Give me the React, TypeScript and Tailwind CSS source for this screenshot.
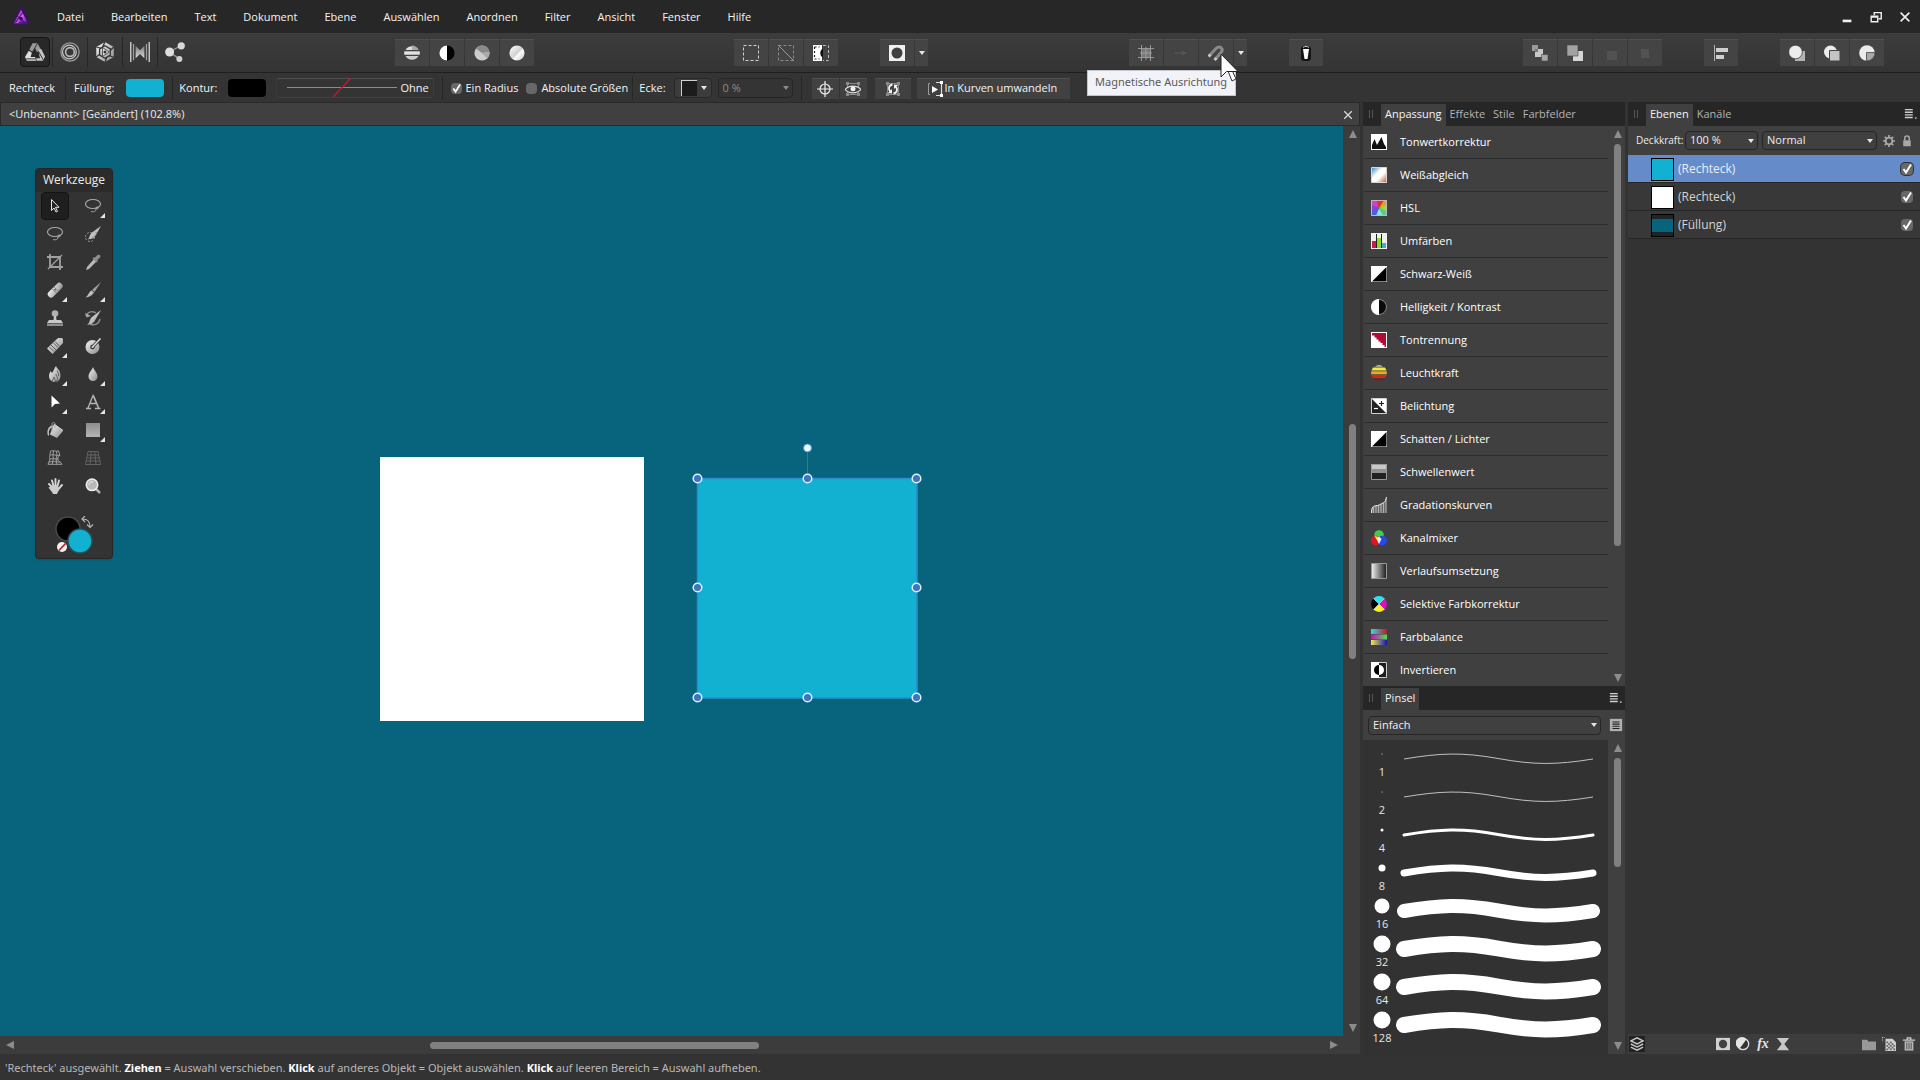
import type { ReactNode } from 'react';
import clsx from 'clsx';

interface IconProps {
  children: ReactNode;
  className?: string;
}

function Icon({ children, className = 'size-4' }: IconProps) {
  return (
    <svg viewBox="0 0 16 16" className={clsx('block shrink-0', className)} fill="none" aria-hidden="true">
      {children}
    </svg>
  );
}

// gradients shared by all icons
function Gradients() {
  return (
    <svg width="0" height="0" className="absolute" aria-hidden="true">
      <defs>
        <linearGradient id="silver" x1="0" y1="0" x2="1" y2="1">
          <stop offset="0" stopColor="#f4f4f4" />
          <stop offset="1" stopColor="#8c8c8c" />
        </linearGradient>
        <linearGradient id="steel" x1="0" y1="0" x2="0" y2="1">
          <stop offset="0" stopColor="#7d7d7d" />
          <stop offset="1" stopColor="#dcdcdc" />
        </linearGradient>
        <linearGradient id="gray" x1="0" y1="0" x2="0" y2="1">
          <stop offset="0" stopColor="#8d8d8d" />
          <stop offset="1" stopColor="#b5b5b5" />
        </linearGradient>
        <linearGradient id="logo" x1="0" y1="0" x2="1" y2="1">
          <stop offset="0" stopColor="#7a1fc4" />
          <stop offset="0.5" stopColor="#e05cf5" />
          <stop offset="1" stopColor="#5b1a9c" />
        </linearGradient>
        <linearGradient id="balance" x1="0" y1="0" x2="1" y2="1">
          <stop offset="0" stopColor="#2f86c9" />
          <stop offset="0.4" stopColor="#ffffff" />
          <stop offset="0.6" stopColor="#ffffff" />
          <stop offset="1" stopColor="#c8551c" />
        </linearGradient>
        <linearGradient id="fade" x1="0" y1="0" x2="1" y2="0">
          <stop offset="0" stopColor="#f2f2f2" />
          <stop offset="1" stopColor="#1c1c1c" />
        </linearGradient>
        <linearGradient id="cyanRed" x1="0" y1="0" x2="1" y2="0">
          <stop offset="0" stopColor="#2ee0d8" />
          <stop offset="1" stopColor="#c41230" />
        </linearGradient>
        <linearGradient id="magentaGreen" x1="0" y1="0" x2="1" y2="0">
          <stop offset="0" stopColor="#c810c0" />
          <stop offset="1" stopColor="#4be04b" />
        </linearGradient>
        <linearGradient id="yellowBlue" x1="0" y1="0" x2="1" y2="0">
          <stop offset="0" stopColor="#f0ec4a" />
          <stop offset="1" stopColor="#1414b4" />
        </linearGradient>
        <linearGradient id="sheen" x1="0" y1="0" x2="1" y2="1">
          <stop offset="0" stopColor="#ffffff" />
          <stop offset="0.5" stopColor="#d2d2d2" />
          <stop offset="0.6" stopColor="#fafafa" />
          <stop offset="1" stopColor="#c4c4c4" />
        </linearGradient>
      </defs>
    </svg>
  );
}

function Caret({ className = 'fill-[#e6e6e6]' }: { className?: string }) {
  return (
    <svg viewBox="0 0 6 4" className={clsx('block h-1 w-1.5 shrink-0', className)} aria-hidden="true">
      <path d="M0 0h6L3 4z" />
    </svg>
  );
}

function Arrow({ className }: { className?: string }) {
  return (
    <svg viewBox="0 0 8 8" className={clsx('block size-2 shrink-0 fill-[#8c8c8c]', className)} aria-hidden="true">
      <path d="M4 0l4 8H0z" />
    </svg>
  );
}

function Tick({ label, checked, className }: { label: string; checked?: boolean; className?: string }) {
  return (
    <input
      type="checkbox"
      aria-label={label}
      defaultChecked={checked}
      className={clsx('peer block size-full appearance-none rounded-sm bg-[#686868]', className)}
    />
  );
}

function TickMark() {
  return (
    <svg viewBox="0 0 12 12" className="pointer-events-none absolute inset-0 hidden size-full peer-checked:block" fill="none">
      <path d="M2.500 6l2.500 3.500L10 1.500" stroke="#fff" strokeWidth="2" />
    </svg>
  );
}

function Checkbox({ label, checked }: { label: string; checked?: boolean }) {
  return (
    <label className="flex items-center gap-1">
      <span className="relative size-[11px]">
        <Tick label={label} checked={checked} />
        <TickMark />
      </span>
      {label}
    </label>
  );
}

interface DropdownProps {
  label: string;
  value: string;
  className?: string;
  disabled?: boolean;
}

function Dropdown({ label, value, className, disabled }: DropdownProps) {
  return (
    <span className={clsx('relative block', className)}>
      <select
        aria-label={label}
        disabled={disabled}
        className="block size-full appearance-none rounded-sm border border-[#262626] bg-transparent pl-1 outline-none"
      >
        <option>{value}</option>
      </select>
      <span className="pointer-events-none absolute inset-y-0 right-1 flex items-center">
        <Caret className={disabled ? 'fill-[#8a8a8a]' : 'fill-[#e6e6e6]'} />
      </span>
    </span>
  );
}

const menus = [
  'Datei',
  'Bearbeiten',
  'Text',
  'Dokument',
  'Ebene',
  'Auswählen',
  'Anordnen',
  'Filter',
  'Ansicht',
  'Fenster',
  'Hilfe',
];

function MenuBar() {
  return (
    <header className="flex h-[33px] shrink-0 items-center bg-[#272727] pl-3">
      <Icon className="mr-[27px] size-[18px]">
        <path d="M7 0h2.500L16 14.500H0z" fill="#3d0f6e" />
        <path d="M8 1.500l6 12H2z" fill="url(#logo)" />
        <path d="M3 13L9.500 4M5 7.500l7 6M14 12.500H6" stroke="#4a0f80" strokeWidth="1" />
        <circle cx="8" cy="9.500" r="1.600" fill="#2b0a4a" />
      </Icon>
      <nav className="flex gap-[27px] pt-0.5 text-[11px] text-[#f4f4f4]">
        {menus.map(menu => (
          <button key={menu} type="button">
            {menu}
          </button>
        ))}
      </nav>
      <div className="ml-auto flex items-center gap-[15px] pr-2">
        <button type="button" aria-label="Minimieren">
          <Icon className="size-3.5">
            <path d="M3 11h10v3H3z" fill="#f0f0f0" />
          </Icon>
        </button>
        <button type="button" aria-label="Wiederherstellen">
          <Icon className="size-3.5">
            <path d="M6 6V3h8v7h-3" stroke="#f0f0f0" strokeWidth="1.600" />
            <path d="M2.500 7h7.500v6.500H2.500zM2.500 8h7.500" stroke="#f0f0f0" strokeWidth="1.600" />
          </Icon>
        </button>
        <button type="button" aria-label="Schließen">
          <Icon className="size-3.5">
            <path d="M3 3l10 10M13 3L3 13" stroke="#f0f0f0" strokeWidth="1.800" />
          </Icon>
        </button>
      </div>
    </header>
  );
}

const personas = [
  {
    name: 'Photo Persona',
    icon: (
      <>
        <path d="M6 1h4l3 5.500-3.500 1.500L8 4.500 6 8 3.500 6z" fill="#9a9a9a" />
        <path d="M10.500 6.500l2.500-1 3 6-1.500 3.500H9.500l-1-2h3.500z" fill="#c4c4c4" />
        <path d="M3 7l2.500 1.500L4.500 12H8l1 3H1.500L0 12z" fill="#dedede" />
        <path d="M10 1l-4 7M15 15l-4.500-8M1 13.500h8" stroke="#333" strokeWidth="0.800" />
      </>
    ),
  },
  {
    name: 'Liquify Persona',
    icon: (
      <>
        <circle cx="8" cy="8" r="7.300" stroke="#9c9c9c" strokeWidth="1" />
        <circle cx="7.500" cy="8" r="5.500" stroke="#c8c8c8" strokeWidth="1" />
        <circle cx="8" cy="8" r="3.500" stroke="#b8b8b8" strokeWidth="1.300" />
      </>
    ),
  },
  {
    name: 'Develop Persona',
    icon: (
      <>
        <path d="M8 0l7 4v8l-7 4-7-4V4z" fill="url(#silver)" />
        <path d="M8 3l4.300 2.500v5L8 13l-4.300-2.500v-5z" stroke="#333" strokeWidth="1" />
        <path d="M8 0L6 4M15 4l-3 3M15 12l-4-1M8 16l1.500-4M1 12l3-2.500M1 4l4 1" stroke="#333" strokeWidth="1" />
        <path d="M6 4.500L11.500 8 6 11.500z" fill="#e0e0e0" stroke="#333" strokeWidth="0.600" />
        <circle cx="8" cy="8" r="1.200" fill="#333" />
      </>
    ),
  },
  {
    name: 'Tone Mapping Persona',
    icon: (
      <>
        <path d="M0.600 0v16M15.400 0v16" stroke="#c4c4c4" strokeWidth="1.200" />
        <path d="M2.800 1.500v13M13.200 1.500v13" stroke="#a0a0a0" strokeWidth="1" />
        <path d="M4.500 3l3.500 3.500L11.500 3v10L8 9.500 4.500 13z" fill="url(#steel)" />
      </>
    ),
  },
  {
    name: 'Export Persona',
    icon: (
      <>
        <path d="M3.500 8l9-5M3.500 8l8 5.500" stroke="#9a9a9a" strokeWidth="1" />
        <circle cx="3.700" cy="8" r="3.600" fill="#dedede" />
        <circle cx="13" cy="3" r="2.900" fill="#d8d8d8" />
        <circle cx="11.500" cy="13.500" r="2.400" fill="#cfcfcf" />
      </>
    ),
  },
];

interface Tool {
  name: string;
  icon: ReactNode;
}

const autoTools: Tool[] = [
  {
    name: 'Auto-Tonwerte',
    icon: (
      <>
        <path d="M1.500 5a7.500 7.500 0 0 1 13 0z" fill="#dedede" />
        <path d="M8 .5A7.500 7.500 0 0 1 14.500 5H8z" fill="#a8a8a8" />
        <path d="M.2 6.300h15.600v3.400H.2z" fill="#e4e4e4" />
        <path d="M1.500 11a7.500 7.500 0 0 0 13 0z" fill="#cfcfcf" />
      </>
    ),
  },
  {
    name: 'Auto-Kontrast',
    icon: (
      <>
        <circle cx="8" cy="8" r="7.600" fill="#000" />
        <path d="M8 .4a7.600 7.600 0 0 0 0 15.200z" fill="#fff" />
      </>
    ),
  },
  {
    name: 'Auto-Farben',
    icon: (
      <>
        <circle cx="8" cy="8" r="7.600" fill="#cccccc" />
        <path d="M8 8L2 3.500A7.600 7.600 0 0 1 15.500 7z" fill="#8a8a8a" />
        <path d="M8 8l7.500-1a7.600 7.600 0 0 1-2.500 6.500z" fill="#a8a8a8" />
      </>
    ),
  },
  { name: 'Auto-Weißabgleich', icon: <circle cx="8" cy="8" r="7.600" fill="url(#sheen)" /> },
];

const selectionTools: Tool[] = [
  {
    name: 'Alles auswählen',
    icon: <path d="M.5.5h15v15H.5z" stroke="#d0d0d0" strokeWidth="1" strokeDasharray="3 2" />,
  },
  {
    name: 'Auswahl aufheben',
    icon: (
      <>
        <path d="M.5.5h15v15H.5z" stroke="#8a8a8a" strokeWidth="1" strokeDasharray="3 2" />
        <path d="M0 0l16 16" stroke="#9a9a9a" strokeWidth="1" />
      </>
    ),
  },
  {
    name: 'Pixelauswahl umkehren',
    icon: (
      <>
        <path d="M0 0h9v16H0z" fill="#fff" />
        <path d="M1.500 2h5M1.500 2v12M1.500 14h5" stroke="#222" strokeWidth="1.200" strokeDasharray="2 2" />
        <path d="M10 3.500v9a5 5 0 0 1 0-9z" fill="#111" />
        <path d="M10 .5h5.500v15H10" stroke="#bbb" strokeWidth="1" strokeDasharray="3 2" />
      </>
    ),
  },
];

const orderTools: Tool[] = [
  {
    name: 'Ganz nach hinten',
    icon: (
      <>
        <path d="M0 0h6v6H0z" fill="#9a9a9a" />
        <path d="M3 4h8v8H3z" fill="#c8c8c8" />
        <path d="M3 4h3v3H3z" fill="#777" />
        <path d="M9.500 9.500h6.500V16H9.500z" fill="#a6a6a6" stroke="#444" strokeWidth="0.600" />
      </>
    ),
  },
  {
    name: 'Nach hinten',
    icon: (
      <>
        <path d="M6 6h10v10H6z" fill="#d6d6d6" />
        <path d="M0 0h11v11H0z" fill="#a2a2a2" stroke="#444" strokeWidth="0.600" />
      </>
    ),
  },
  { name: 'Nach vorne', icon: <path d="M5 6h10v9H5z" fill="#525252" /> },
  { name: 'Ganz nach vorne', icon: <path d="M4 4h8v9H4z" fill="#525252" /> },
];

const booleanTools: Tool[] = [
  {
    name: 'Hinter Auswahl einfügen',
    icon: (
      <>
        <path d="M6 6h10v10H6z" fill="#b4b4b4" />
        <circle cx="6.500" cy="7" r="6.800" fill="#ececec" stroke="#444" strokeWidth="0.800" />
      </>
    ),
  },
  {
    name: 'Über Auswahl einfügen',
    icon: (
      <>
        <circle cx="6.500" cy="7" r="6.500" fill="#ececec" />
        <path d="M5.500 5.500H16V16H5.500z" fill="#c4c4c4" stroke="#444" strokeWidth="1" />
      </>
    ),
  },
  {
    name: 'In Auswahl einfügen',
    icon: (
      <>
        <circle cx="8" cy="8" r="7.800" fill="#ececec" />
        <path d="M7.500 7.500h8.300A7.800 7.800 0 0 1 7.500 15.800z" fill="#a8a8a8" stroke="#444" strokeWidth="0.800" />
      </>
    ),
  },
];

function ToolGroup({ tools, className, children }: { tools: Tool[]; className?: string; children?: ReactNode }) {
  return (
    <div className={clsx('flex h-[27px] gap-px rounded-sm', className)}>
      {tools.map(tool => (
        <button
          key={tool.name}
          type="button"
          aria-label={tool.name}
          className="flex w-[34px] items-center justify-center border-t border-[#505050] bg-[#444444]"
        >
          <Icon>{tool.icon}</Icon>
        </button>
      ))}
      {children}
    </div>
  );
}

function MoreButton({ label }: { label: string }) {
  return (
    <button
      type="button"
      aria-label={label}
      className="flex w-[13px] items-center justify-center border-t border-[#505050] bg-[#444444]"
    >
      <Caret />
    </button>
  );
}

function Toolbar() {
  return (
    <div className="flex h-10 shrink-0 items-center border-b border-[#1f1f1f] bg-linear-to-b from-[#3c3c3c] to-[#343434] pr-9 pb-px pl-5">
      <div className="flex w-[375px] items-center">
        {personas.map((persona, index) => (
          <button
            key={persona.name}
            type="button"
            aria-label={persona.name}
            className={clsx(
              'flex h-[30px] items-center justify-center',
              index === 0
                ? 'mr-0.5 w-[30px] rounded-sm border border-[#151515] bg-[#282828]'
                : 'w-[35px] border-l border-[#262626]'
            )}
          >
            <Icon className="size-5">{persona.icon}</Icon>
          </button>
        ))}
      </div>
      <ToolGroup tools={autoTools} />
      <ToolGroup className="ml-[200px]" tools={selectionTools} />
      <ToolGroup
        className="ml-[42px]"
        tools={[
          {
            name: 'Schnellmaske',
            icon: (
              <>
                <path d="M0 0h16v16H0z" fill="#f0f0f0" />
                <circle cx="8" cy="8" r="5.500" fill="#404040" />
              </>
            ),
          },
        ]}
      >
        <MoreButton label="Maskenoptionen" />
      </ToolGroup>
      <div className="relative ml-[201px]">
        <ToolGroup
          tools={[
            {
              name: 'Raster anzeigen',
              icon: (
                <>
                  <path d="M4 4h9v9H4z" fill="#777" />
                  <path d="M3.500 0v16M8 2v13M12.500 0v16M0 3.500h16M2 8h12M0 12.500h16" stroke="#a0a0a0" strokeWidth="0.900" />
                </>
              ),
            },
            { name: 'Hilfslinien', icon: <path d="M2 8h11M9 6l3 2-3 2" stroke="#5c5c5c" strokeWidth="1" /> },
            {
              name: 'Magnetische Ausrichtung',
              icon: (
                <>
                  <path d="M1.500 10.500L8 3.500c4-3.500 8 .5 5 4L7.500 14" stroke="#8a8a8a" strokeWidth="3" />
                  <path d="M.5 11.500l2-2M6.500 15l2-2" stroke="#c8c8c8" strokeWidth="3" />
                </>
              ),
            },
          ]}
        >
          <MoreButton label="Ausrichtungsoptionen" />
        </ToolGroup>
        {/* tooltip and pointer over the magnet button */}
        <div
          role="tooltip"
          className="absolute top-[31px] left-[-42px] z-10 flex h-[26px] w-[149px] items-center border border-[#c4c4cc] bg-[#f2f3f8] pl-[7px] font-['Noto_Sans',sans-serif] text-[11px] whitespace-nowrap text-[#5a5a5e]"
        >
          Magnetische Ausrichtung
        </div>
        <svg viewBox="0 0 19 30" className="pointer-events-none absolute top-[14px] left-[91px] z-20 h-[30px] w-[19px]">
          <path d="M8 18l4 10 4-2-4-9" fill="#fff" stroke="#333" strokeWidth="1" />
          <path d="M1 1v23l5.500-5.500H18z" fill="#fff" stroke="#222" strokeWidth="1" />
        </svg>
      </div>
      <ToolGroup
        className="ml-[42px]"
        tools={[
          {
            name: 'Assistent',
            icon: (
              <>
                <path d="M3 3l2-2h6l2 2v11l-2 2H5l-2-2z" fill="#151515" />
                <path d="M5 4h6l-1.500 10h-3z" fill="#fff" />
                <path d="M5 2.500c2-1.500 4-1.500 6 0" stroke="#ccc" strokeWidth="1" />
              </>
            ),
          },
        ]}
      />
      <div className="ml-auto flex gap-[42px]">
        <ToolGroup tools={orderTools} />
        <ToolGroup
          tools={[
            {
              name: 'Ausrichtung',
              icon: (
                <>
                  <path d="M1.500 0v16" stroke="#b0b0b0" strokeWidth="1" />
                  <path d="M3 3h12v4H3zM3 10h8v4H3z" fill="#cfcfcf" />
                </>
              ),
            },
          ]}
        />
        <ToolGroup tools={booleanTools} />
      </div>
    </div>
  );
}

function Divider() {
  return <span className="h-6 w-px bg-[#262626]" />;
}

const boxHandles = (
  <>
    <path d="M2.500 2.500h11v11h-11z" stroke="#8a8a8a" strokeWidth="1" />
    <path d="M1 1h3v3H1zM12 1h3v3h-3zM1 12h3v3H1zM12 12h3v3h-3z" fill="#8a8a8a" />
  </>
);

function ContextBar() {
  return (
    <div className="flex h-[29px] shrink-0 items-center bg-[#343434] pt-px pl-[9px] text-[11px] text-[#f4f4f4]">
      <span className="w-12">Rechteck</span>
      <span className="mx-2 flex">
        <Divider />
      </span>
      <label className="flex items-center gap-3">
        Füllung:
        <button type="button" aria-label="Füllung" className="h-[18px] w-[38px] rounded-sm bg-[#12b1d2]" />
      </label>
      <span className="mr-1.5 ml-2 flex">
        <Divider />
      </span>
      <label className="flex items-center gap-2.5">
        Kontur:
        <button type="button" aria-label="Kontur" className="h-[18px] w-[38px] rounded-sm bg-black" />
      </label>
      <button
        type="button"
        className="mr-2 ml-2.5 flex h-5 w-[158px] items-center gap-1 rounded-sm border border-t-[#505050] border-x-[#3c3c3c] border-b-[#404040] pl-2.5"
      >
        <svg viewBox="0 0 110 20" className="h-5 w-[110px]" aria-hidden="true">
          <path d="M0 9.500h110" stroke="#8c8c8c" />
          <path d="M46 19L64 0" stroke="#b0202c" strokeWidth="1.500" />
        </svg>
        Ohne
      </button>
      <Divider />
      <div className="mr-1 ml-2 flex gap-2">
        <Checkbox label="Ein Radius" checked />
        <Checkbox label="Absolute Größen" />
      </div>
      <Divider />
      <span className="mr-2 ml-1.5">Ecke:</span>
      <button
        type="button"
        aria-label="Eckentyp"
        className="mr-1.5 flex h-5 w-[38px] items-center justify-between rounded-sm border border-[#282828] bg-[#3c3c3c] pr-1 pl-1.5"
      >
        <span className="h-4 w-4 border-t border-l border-[#d0d0d0] bg-[#1c1c1c]" />
        <Caret />
      </button>
      <Dropdown label="Eckenradius" value="0 %" disabled className="mr-2 h-5 w-[75px] text-[#8a8a8a]" />
      <Divider />
      <div className="ml-2.5 flex h-[21px] gap-px">
        <button type="button" aria-label="Transformationsursprung" className="flex w-[27px] items-center justify-center border-t border-[#505050] bg-[#414141]">
          <Icon>
            <circle cx="8" cy="8" r="5" stroke="#f0f0f0" strokeWidth="1.200" />
            <path d="M8 0v16M0 8h16" stroke="#f0f0f0" strokeWidth="1.200" />
          </Icon>
        </button>
        <button type="button" aria-label="Auswahl ausblenden" className="flex w-[27px] items-center justify-center border-t border-[#505050] bg-[#414141]">
          <Icon>
            {boxHandles}
            <path d="M0 8.500c4-4.500 12-4.500 16 0-4 4.500-12 4.500-16 0z" fill="#414141" stroke="#e0e0e0" strokeWidth="1.200" />
            <circle cx="8" cy="7.800" r="2.500" fill="#f0f0f0" />
          </Icon>
        </button>
      </div>
      <button type="button" aria-label="Auswahlfelder drehen" className="ml-2 flex h-[21px] w-9 items-center justify-center border-t border-[#505050] bg-[#414141]">
        <Icon>
          {boxHandles}
          <path d="M7.500 3.500C3.500 4 3 8.500 5.500 10.500M8.500 12.500c4-.5 4.500-5 2-7" stroke="#f4f4f4" strokeWidth="1.800" />
          <path d="M7 12.500l-4-.5L7 8zM9 3.500l4 .5L9 8z" fill="#f4f4f4" />
        </Icon>
      </button>
      <button
        type="button"
        className="ml-1.5 flex h-[21px] w-[153px] items-center gap-0.5 border-t border-[#505050] bg-[#414141] pl-2.5"
      >
        <Icon>
          <path d="M3 2.500H1.500v11H3" stroke="#999" strokeWidth="1" />
          <path d="M5 5l6 3.500L5 12z" fill="#fff" />
          <path d="M9 1.500h5.500v13H9" stroke="#ddd" strokeWidth="1.200" />
          <path d="M13 0h3v3h-3zM13 13h3v3h-3z" fill="#fff" />
        </Icon>
        In Kurven umwandeln
      </button>
    </div>
  );
}

const lasso = (
  <>
    <ellipse cx="8" cy="6" rx="7.500" ry="4.500" stroke="#a8a8a8" strokeWidth="1.100" />
    <path d="M13 9c1 1.500-1 2.500-2 1.500s1-2 2.500-1M11 11c0 3-3 3-5 2.500" stroke="#a8a8a8" strokeWidth="1" />
  </>
);

const tools: (Tool & { more?: boolean })[] = [
  {
    name: 'Verschieben',
    icon: <path d="M4.500 1.500v11l2.500-2.500 2 4 1.500-.7-2-4h3.500z" fill="#222" stroke="#e8e8e8" strokeWidth="1" />,
  },
  { name: 'Freihandauswahl', more: true, icon: lasso },
  { name: 'Lasso', icon: lasso },
  {
    name: 'Auswahlpinsel',
    icon: (
      <>
        <circle cx="5" cy="11" r="4.500" stroke="#999" strokeWidth="1" strokeDasharray="2 1.500" />
        <path d="M16 0l-4 7-3-2zM9 5l3 2.500-3 4c-2 2-4 1-6 2 1.500-2 1.500-4 3-6z" fill="url(#silver)" />
      </>
    ),
  },
  {
    name: 'Zuschneiden',
    icon: (
      <>
        <path d="M3 0v13h13M0 3h13v13" stroke="#a0a0a0" strokeWidth="1.800" />
        <path d="M1 15L15 1" stroke="#a0a0a0" strokeWidth="1.200" />
      </>
    ),
  },
  {
    name: 'Pipette',
    icon: (
      <>
        <path d="M9 5l2.500 2.500L4 15l-3 1 1-3z" fill="#b8b8b8" />
        <path d="M7.500 4.500l4 4 1.500-1.500-.8-.8L15 3.500C16.500 1.500 14 0 12.500 1L9.800 3.800 9 3z" fill="#8c8c8c" />
      </>
    ),
  },
  {
    name: 'Reparaturpinsel',
    more: true,
    icon: (
      <>
        <rect x="-1" y="5" width="18" height="6.500" rx="3" transform="rotate(-45 8 8)" fill="url(#silver)" />
        <path d="M5 6.500L9.500 11M7 5l4.500 4.500" stroke="#777" strokeWidth="0.800" />
        <path d="M7 7.500h2M7.500 9h1" stroke="#666" strokeWidth="1" />
      </>
    ),
  },
  {
    name: 'Malpinsel',
    more: true,
    icon: (
      <>
        <path d="M16 0L9.500 10 7 8z" fill="#a0a0a0" />
        <path d="M6.500 8.500L9 10.500c-1.500 3-4.500 4.500-8.500 5 2.500-1.500 3-5 6-7z" fill="url(#silver)" />
      </>
    ),
  },
  {
    name: 'Klonstempel',
    icon: (
      <>
        <circle cx="8" cy="3.500" r="3.300" fill="#b0b0b0" />
        <path d="M7 6h2l.5 4H14l2 3H0l2-3h4.500z" fill="#c8c8c8" />
        <path d="M0 13.500h16V16H0z" fill="#8e8e8e" />
      </>
    ),
  },
  {
    name: 'Protokollpinsel',
    icon: (
      <>
        <path d="M1 6c2-5 7-5 10-3M15 9c-1 5-6 7-10 5" stroke="#8a8a8a" strokeWidth="1.500" />
        <path d="M0 3l1.500 4.500L6 6z" fill="#a8a8a8" />
        <path d="M16 0l-5.500 9.500L7 7zM7 7l3.500 2.500c-2 4-4 4.500-8.500 5.500 3-2 2-5 5-8z" fill="url(#silver)" />
      </>
    ),
  },
  {
    name: 'Radierer',
    more: true,
    icon: (
      <>
        <path d="M11 0h4l1 1v4L5.500 16 0 10.500z" fill="url(#silver)" />
        <path d="M4 7l5 5M6.500 5l4.500 4.500M2.500 9l4.500 4.500M8 3.500L12.500 8" stroke="#555" strokeWidth="1" />
      </>
    ),
  },
  {
    name: 'Schärfen',
    icon: (
      <>
        <circle cx="7.500" cy="9" r="7" fill="url(#silver)" />
        <circle cx="7.500" cy="9" r="2.300" fill="#333" />
        <path d="M7.500 9L15 1" stroke="#333" strokeWidth="3" />
        <path d="M7.500 9L15.500 .5" stroke="#e0e0e0" strokeWidth="1.500" />
        <circle cx="7.500" cy="9" r="1" fill="#ddd" />
      </>
    ),
  },
  {
    name: 'Nachbelichten',
    more: true,
    icon: (
      <>
        <path d="M9 0c1 3 4.500 4 4.500 9.500C13.500 13 11.500 16 8 16s-6-2.500-6-6c0-2 1-3.500 1.500-5 .7 1 1 1.500 1.500 2C7 5 7 2 9 0z" fill="url(#silver)" />
        <path d="M9 8c0 2 1.500 2.500 1.500 4.500 0 2-1 3-2.500 3.500 1-2-1-3-1-5 0 2-2 2.500-1.500 4.500M10 4.500c1 2 2 3 1.500 5.500" stroke="#555" strokeWidth="0.900" />
      </>
    ),
  },
  {
    name: 'Weichzeichnen',
    more: true,
    icon: <path d="M8 1c1 3 4.500 6 4.500 9.500a4.500 4.500 0 0 1-9 0C3.500 7 7 4 8 1z" fill="url(#silver)" />,
  },
  { name: 'Knoten', more: true, icon: <path d="M4.500 1.500v12L8 10l5-.5z" fill="#fff" /> },
  {
    name: 'Kunsttext',
    more: true,
    icon: <path d="M1 14.500h5M10 14.500h5.500M3 14L8 1.500 13.500 14M5 9.500h6.500M8.700 2l5 12" stroke="#b4b4b4" strokeWidth="1.300" />,
  },
  {
    name: 'Füllwerkzeug',
    icon: (
      <>
        <path d="M7 2l9 7-6 7-7-3.500z" fill="url(#silver)" />
        <path d="M7 2l9 6.500" stroke="#e8e8e8" strokeWidth="1" />
        <path d="M7 3.500C3 3 0 6 .5 12c.5 2.500 2 2 1.500 0C1.500 8 3 6 6 5z" fill="#c4c4c4" />
        <path d="M5 10V2c0-2 3-2 3 0v4" stroke="#aaa" strokeWidth="0.900" />
      </>
    ),
  },
  { name: 'Rechteck', more: true, icon: <path d="M1 1h14v14H1z" fill="url(#gray)" /> },
  {
    name: 'Maschenverzerrung',
    icon: (
      <path
        d="M3.500 1c3-1 6 1 8-.2l1.500 4.500c-2 1.200-2 2.200-3 4l5 5H1L3 9c-1-1.500 0-3 .5-8zM3 5c3-1 6 1 10 .3M3 9c3-1 5 .5 9 0M2 12c4-1 6 0 11.500 0M6.500 1L6 5l.2 4L5 14.500M9.500 1l.5 4-1 4 1 5.500"
        stroke="#a8a8a8"
        strokeWidth="0.900"
      />
    ),
  },
  {
    name: 'Perspektive',
    icon: (
      <path
        d="M3 1.500h10l2.500 13H.500zM2.500 5h11M2 8h12.500M1.200 11h14M6.300 1.500L5 14.500M9.700 1.500L11 14.500"
        stroke="#686868"
        strokeWidth="0.900"
      />
    ),
  },
  {
    name: 'Ansicht',
    icon: (
      <>
        <path d="M5 9L2 6M6.500 8L5 2.500M8.500 8V1M10.500 8l1.500-5.500M11.500 11L15 7" stroke="#d6d6d6" strokeWidth="1.900" strokeLinecap="round" />
        <path d="M4.500 8C7 6.500 10 6.500 11.500 9.500L13 9c-.5 3-2 4.500-3 7H6c-.5-2-3-4-4.500-6.500z" fill="#cccccc" />
      </>
    ),
  },
  {
    name: 'Zoom',
    icon: (
      <>
        <path d="M10.500 10.500L15 15" stroke="#b0b0b0" strokeWidth="2.500" />
        <circle cx="7" cy="6.800" r="5.700" fill="#b8b8b8" stroke="#ececec" strokeWidth="1.600" />
        <path d="M4 7c0-2 1.500-3.500 4-3" stroke="#f4f4f4" strokeWidth="1" />
      </>
    ),
  },
];

function ToolPalette() {
  return (
    <section
      aria-label="Werkzeuge"
      className="absolute top-[42px] left-[35px] w-[78px] rounded-sm border border-[#262626] bg-[#333333] pb-1 shadow"
    >
      <h2 className="flex h-[23px] items-center justify-center bg-[#2b2b2b] pb-0.5 text-[12px] text-[#ececec]">Werkzeuge</h2>
      <div className="grid grid-cols-2 justify-items-center">
        {tools.map((tool, index) => (
          <button
            key={tool.name}
            type="button"
            aria-label={tool.name}
            className={clsx(
              'relative flex size-7 items-center justify-center rounded-sm',
              index === 0 && 'border border-[#141414] bg-[#1f1f1f]'
            )}
          >
            <Icon>{tool.icon}</Icon>
            {tool.more && (
              <svg viewBox="0 0 5 5" className="absolute right-0.5 bottom-0.5 size-[5px] fill-[#e6e6e6]">
                <path d="M5 0v5H0z" />
              </svg>
            )}
          </button>
        ))}
      </div>
      <svg viewBox="0 0 40 38" className="mt-4 ml-[19px] block h-[38px] w-10" role="img" aria-label="Farben">
        <circle cx="13" cy="13" r="12" fill="#000" stroke="#4a4a4a" strokeWidth="1.500" />
        <circle cx="25" cy="25" r="12" fill="#12b1d2" stroke="#2c5058" strokeWidth="1.500" />
        <circle cx="7" cy="31" r="5" fill="#f4f4f4" />
        <path d="M4 34.500l6.500-7" stroke="#c81e32" strokeWidth="1.800" />
        <path d="M28 3c5 0 7 3 7 8M30 0l-3 3 3 3M32 8.500l3 3 3-3" stroke="#b4b4b4" strokeWidth="1.200" fill="none" />
      </svg>
    </section>
  );
}

const handles = [
  [0.5, 0.5],
  [110.5, 0.5],
  [219.5, 0.5],
  [0.5, 109.5],
  [219.5, 109.5],
  [0.5, 219.5],
  [110.5, 219.5],
  [219.5, 219.5],
];

function Canvas() {
  return (
    <main className="relative min-w-0 flex-1 overflow-hidden bg-[#08647d]">
      <div className="absolute top-[331px] left-[380px] size-[264px] bg-white" />
      <svg viewBox="0 0 221 221" className="absolute top-[352px] left-[697px] size-[221px] overflow-visible">
        <path d="M.5.5h219.500v219.500H.5z" fill="#12b1d2" stroke="#2a8ccc" strokeWidth="1.500" />
        <path d="M110.500 0v-25" stroke="#2479c8" />
        <circle cx="110.500" cy="-30" r="4" fill="#f0faff" stroke="#4a90d0" />
        {handles.map(([x, y]) => (
          <circle key={`${x}-${y}`} cx={x} cy={y} r="4.300" fill="#3a76c4" stroke="#e4f2fc" strokeWidth="1.500" />
        ))}
      </svg>
      <ToolPalette />
    </main>
  );
}

function Grip() {
  return <span className="mr-2 ml-1.5 h-2 w-1 border-x border-[#555555]" />;
}

interface TabsProps {
  tabs: string[];
  menu?: boolean;
}

function PanelTabs({ tabs, menu }: TabsProps) {
  return (
    <div className="flex h-6 shrink-0 items-center bg-[#262626] pr-0.5 text-[11px] text-[#b4b4b4]">
      <Grip />
      {tabs.map((tab, index) => (
        <button
          key={tab}
          type="button"
          className={clsx('h-[22px] self-end px-1 pb-0.5', index === 0 && 'bg-[#404040] text-[#f4f4f4]')}
        >
          {tab}
        </button>
      ))}
      {menu && (
        <button type="button" aria-label="Bedienfeldmenü" className="ml-auto">
          <Icon className="size-3.5">
            <path d="M1 3h9M1 6h9M1 9h9M1 12h9" stroke="#d0d0d0" strokeWidth="1.500" />
            <path d="M12 12h3l-1.500 2z" fill="#d0d0d0" />
          </Icon>
        </button>
      )}
    </div>
  );
}

const adjustments: Tool[] = [
  {
    name: 'Tonwertkorrektur',
    icon: (
      <>
        <path d="M0 0h16v16H0z" fill="#fff" />
        <path d="M1 15V11l2.500-6L6 11l4.500-8L13 10l2 3v2z" fill="#111" />
      </>
    ),
  },
  {
    name: 'Weißabgleich',
    icon: <path d="M.5.5h15v15H.5z" fill="url(#balance)" stroke="#d8d8d8" />,
  },
  {
    name: 'HSL',
    icon: (
      <>
        <path d="M0 0h6l2 8L0 6z" fill="#c846c0" />
        <path d="M6 0h7L8 8z" fill="#e83028" />
        <path d="M13 0h3v6L8 8z" fill="#e8a020" />
        <path d="M16 5v7L8 8z" fill="#8ae82c" />
        <path d="M16 11v5h-5L8 8z" fill="#50d080" />
        <path d="M12 16H4l4-8z" fill="#90e0f0" />
        <path d="M5 16H0v-5l8-3z" fill="#4a60e0" />
        <path d="M0 12V5l8 3z" fill="#8048d8" />
        <path d="M.5.5h15v15H.5z" stroke="#c4b4c4" />
      </>
    ),
  },
  {
    name: 'Umfärben',
    icon: (
      <>
        <path d="M0 0h16v16H0z" fill="#f0f0f0" />
        <path d="M1 8h4v7H1z" fill="#d01848" />
        <path d="M6 5h4v10H6z" fill="#84e020" />
        <path d="M11 10h4v5h-4z" fill="#4aa8d0" />
        <path d="M5.500 1v14M10.500 1v14" stroke="#222" />
      </>
    ),
  },
  {
    name: 'Schwarz-Weiß',
    icon: (
      <>
        <path d="M0 0h16v16H0z" fill="#fff" />
        <path d="M15.500 1v14.500H1z" fill="#000" />
      </>
    ),
  },
  {
    name: 'Helligkeit / Kontrast',
    icon: (
      <>
        <circle cx="8" cy="8" r="7.500" fill="#0a0a0a" stroke="#888" />
        <path d="M8 0a8 8 0 0 0 0 16z" fill="#fff" />
      </>
    ),
  },
  {
    name: 'Tontrennung',
    icon: (
      <>
        <path d="M0 0h16v16H0z" fill="#fff" />
        <path d="M1 1h14v14h-1.500v-2h-2v-2h-2V9.500h-2v-2h-2v-2h-2v-2H1z" fill="#b40a32" />
      </>
    ),
  },
  {
    name: 'Leuchtkraft',
    icon: (
      <>
        <path d="M4 1.500a8 8 0 0 1 8 0z" fill="#f4f0b0" />
        <path d="M2 2.500h12l1.500 3H.5z" fill="#f4e838" />
        <path d="M.2 6.300h15.600v3H.2z" fill="#f0a828" />
        <path d="M.3 10h15.400l-1.500 3H1.800z" fill="#d42820" />
        <path d="M2.500 13.500h11a8 8 0 0 1-11 0z" fill="#78201c" />
      </>
    ),
  },
  {
    name: 'Belichtung',
    icon: (
      <>
        <path d="M.5.5h15v15H.5z" fill="#222" stroke="#d0d0d0" />
        <path d="M1 1h14v14z" fill="#fff" />
        <path d="M10.500 3v5M8 5.500h5" stroke="#222" strokeWidth="1.200" />
        <path d="M3 10.500h4" stroke="#fff" strokeWidth="1.200" />
      </>
    ),
  },
  {
    name: 'Schatten / Lichter',
    icon: (
      <>
        <path d="M0 0h16v16H0z" fill="#fff" />
        <path d="M15.500 1v14.500H1z" fill="#000" />
      </>
    ),
  },
  {
    name: 'Schwellenwert',
    icon: (
      <>
        <path d="M0 0h16v6H0z" fill="#c8c8c8" />
        <path d="M0 5h16v5H0z" fill="#909090" />
        <path d="M0 9h16v7H0z" fill="#222" />
        <path d="M.5.5h15v15H.5z" stroke="#999" />
      </>
    ),
  },
  {
    name: 'Gradationskurven',
    icon: (
      <>
        <path d="M0 16c0-10 5-5 10-9 2-1.500 4-1 5.500-7V16z" fill="#6a6a6a" />
        <path d="M2.500 10v6M5 8.500V16M7.500 8V16M10 7v9M12.500 6v10M15 2v14" stroke="#b8b8b8" strokeWidth="0.900" />
        <path d="M.5 16c0-10 5-5.500 9.500-9 2.500-1.500 4.500-1 5.500-7" stroke="#f0f0f0" strokeWidth="1" />
      </>
    ),
  },
  {
    name: 'Kanalmixer',
    icon: (
      <>
        <circle cx="8" cy="5" r="4.800" fill="#3cd048" />
        <circle cx="4.800" cy="10.500" r="4.800" fill="#e01428" />
        <circle cx="11.200" cy="10.500" r="4.800" fill="#2848e8" />
        <path d="M8 6.500l2.500 2.500L8 14l-2.500-5z" fill="#f0f0f4" />
        <path d="M3.500 6l4.500 1-2.500 2.500z" fill="#f0e840" />
      </>
    ),
  },
  { name: 'Verlaufsumsetzung', icon: <path d="M.5.5h15v15H.5z" fill="url(#fade)" stroke="#999" /> },
  {
    name: 'Selektive Farbkorrektur',
    icon: (
      <>
        <path d="M8 8L2.400 2.400a8 8 0 0 1 11.200 0z" fill="#2ce4ec" />
        <path d="M8 8l5.600-5.600a8 8 0 0 1 0 11.200z" fill="#d810c0" />
        <path d="M8 8l5.600 5.600a8 8 0 0 1-11.200 0z" fill="#f4f424" />
        <path d="M8 8l-5.600 5.600a8 8 0 0 1 0-11.200z" fill="#000" />
        <path d="M2.400 2.400l11.200 11.200M13.600 2.400L2.400 13.600" stroke="#ddd" strokeWidth="0.700" />
      </>
    ),
  },
  {
    name: 'Farbbalance',
    icon: (
      <>
        <rect width="16" height="5" fill="url(#cyanRed)" />
        <rect y="5.500" width="16" height="5" fill="url(#magentaGreen)" />
        <rect y="11" width="16" height="5" fill="url(#yellowBlue)" />
      </>
    ),
  },
  {
    name: 'Invertieren',
    icon: (
      <>
        <path d="M.5.5h15v15H.5z" fill="#1c1c1c" stroke="#ccc" />
        <path d="M0 0h8v16H0z" fill="#fff" />
        <path d="M8 3a5 5 0 0 0 0 10z" fill="#000" />
        <path d="M8 3a5 5 0 0 1 0 10z" fill="#fff" />
      </>
    ),
  },
];

const brushes = [
  { size: 1, dot: 0.5, stroke: 1 },
  { size: 2, dot: 0.5, stroke: 1 },
  { size: 4, dot: 1.5, stroke: 3 },
  { size: 8, dot: 3.5, stroke: 7 },
  { size: 16, dot: 7.5, stroke: 14 },
  { size: 32, dot: 8.5, stroke: 16 },
  { size: 64, dot: 8.5, stroke: 16 },
  { size: 128, dot: 8.5, stroke: 16 },
];

function AdjustmentPanel() {
  return (
    <aside className="flex w-[262px] shrink-0 flex-col bg-[#404040]">
      <PanelTabs tabs={['Anpassung', 'Effekte', 'Stile', 'Farbfelder']} />
      <div className="flex h-[560px]">
        <ul className="flex-1 overflow-hidden pl-px">
          {adjustments.map(item => (
            <li key={item.name} className="border-b border-[#2c2c2c] last:border-0">
              <button type="button" className="flex h-8 w-full items-center gap-[13px] pl-[7px] text-[11px] text-[#ffffff]">
                <Icon>{item.icon}</Icon>
                {item.name}
              </button>
            </li>
          ))}
        </ul>
        <div className="flex w-[17px] flex-col items-center py-1 pl-0.5">
          <Arrow />
          <span className="mt-1.5 h-[402px] w-[7px] rounded-full bg-[#808080]" />
          <Arrow className="mt-auto rotate-180" />
        </div>
      </div>
      <PanelTabs tabs={['Pinsel']} menu />
      <div className="flex h-[30px] shrink-0 items-center gap-2 pl-[5px] text-[11px] text-[#f0f0f0]">
        <Dropdown label="Pinselkategorie" value="Einfach" className="h-[19px] w-[233px]" />
        <button type="button" aria-label="Listenansicht">
          <Icon className="size-3.5">
            <path d="M1 1h14v14H1z" fill="#b0b0b0" />
            <path d="M4 4.500h8M4 7h8M4 9.500h8M4 12h8" stroke="#222" strokeWidth="1.200" />
          </Icon>
        </button>
      </div>
      <div className="flex min-h-0 flex-1">
        <ul className="flex-1 overflow-hidden bg-[#323232] pt-1">
          {brushes.map(brush => (
            <li key={brush.size}>
              <button type="button" className="flex h-[38px] w-full gap-1.5">
                <span className="flex w-[34px] flex-col items-center pl-1">
                  <svg viewBox="0 0 20 20" className="size-5 fill-white" aria-hidden="true">
                    <circle cx="10" cy="10" r={brush.dot} />
                  </svg>
                  <span className="text-[11px] leading-4 text-[#e6e6e6]">{brush.size}</span>
                </span>
                <svg viewBox="0 0 190 36" className="h-9 w-[190px] overflow-visible" fill="none" aria-hidden="true">
                  <path
                    d="M1 15C37 9 59 8 95 14.500S153 21 190 15"
                    stroke={brush.stroke > 1 ? '#ffffff' : '#c0c0c0'}
                    strokeWidth={brush.stroke}
                    strokeLinecap={brush.stroke > 1 ? 'round' : 'butt'}
                  />
                </svg>
              </button>
            </li>
          ))}
        </ul>
        <div className="flex w-[17px] flex-col items-center py-1 pl-0.5">
          <Arrow />
          <span className="mt-1.5 h-[109px] w-[7px] rounded-full bg-[#808080]" />
          <Arrow className="mt-auto rotate-180" />
        </div>
      </div>
    </aside>
  );
}

const layers = [
  { name: '(Rechteck)', thumb: 'bg-[#12b1d2]', selected: true },
  { name: '(Rechteck)', thumb: 'bg-white', selected: false },
  { name: '(Füllung)', thumb: 'bg-[#08647d] border-y-4 border-[#1f2426]', selected: false },
];

function LayerPanel() {
  return (
    <aside className="flex w-[292px] shrink-0 flex-col bg-[#333333]">
      <PanelTabs tabs={['Ebenen', 'Kanäle']} menu />
      <div className="flex h-[29px] shrink-0 items-center bg-[#404040] pl-2 text-[11px] text-[#ececec]">
        <span className="w-[49px] text-[10px]">Deckkraft:</span>
        <Dropdown label="Deckkraft" value="100 %" className="h-[19px] w-[73px]" />
        <Dropdown label="Mischmodus" value="Normal" className="ml-1 h-[19px] w-[115px]" />
        <button type="button" aria-label="Mischoptionen" className="ml-1.5">
          <Icon className="size-3">
            <circle cx="8" cy="8" r="4.500" stroke="#a8a8a8" strokeWidth="2.500" />
            <path d="M8 0v3M8 13v3M0 8h3M13 8h3M2.300 2.300l2.200 2.200M11.500 11.500l2.200 2.200M13.700 2.300l-2.200 2.200M4.500 11.500l-2.200 2.200" stroke="#a8a8a8" strokeWidth="2.200" />
          </Icon>
        </button>
        <button type="button" aria-label="Ebene sperren" className="ml-1.5">
          <Icon className="size-3">
            <path d="M3 7h10v8H3z" fill="#a8a8a8" />
            <path d="M5 7V4c0-3.500 6-3.500 6 0v3" stroke="#a8a8a8" strokeWidth="2" />
          </Icon>
        </button>
      </div>
      <ul>
        {layers.map((layer, index) => (
          <li
            key={index}
            className={clsx(
              'flex h-7 items-center border-b border-[#262626] pt-px pr-[7px] pl-[23px] text-[12px]',
              layer.selected ? 'bg-[#658bc8] text-[#e8eef8]' : 'bg-[#383838] text-[#d4d4d4]'
            )}
          >
            <span className="mr-1 size-[23px] border border-black">
              <span className={clsx('block size-full', layer.thumb)} />
            </span>
            {layer.name}
            <span className="relative ml-auto size-3">
              <Tick label={`${layer.name} sichtbar`} checked className={layer.selected ? 'ring-1 ring-[#333333]' : ''} />
              <TickMark />
            </span>
          </li>
        ))}
      </ul>
      <div className="mt-auto flex h-5 shrink-0 items-center bg-[#3d3d3d] pr-1 pl-px">
        <button type="button" aria-label="Alle Ebenen bearbeiten" className="flex size-4 items-center justify-center bg-[#222222]">
          <Icon className="size-3.5">
            <path d="M1 4.500L8 1l7 3.500L8 8zM1 8l7 3.500L15 8M1 11.500L8 15l7-3.500" stroke="#c8c8c8" strokeWidth="1.600" />
          </Icon>
        </button>
        <div className="ml-[71px] flex items-center gap-1.5">
          <button type="button" aria-label="Maskierungsebene">
            <Icon className="size-3.5">
              <path d="M0 1h16v14H0z" fill="#d0d0d0" />
              <circle cx="8" cy="8" r="4.800" fill="#404040" />
            </Icon>
          </button>
          <button type="button" aria-label="Anpassungen">
            <Icon className="size-3.5">
              <circle cx="8" cy="8" r="6.500" fill="#333" stroke="#dcdcdc" strokeWidth="1.500" />
              <path d="M12 2.500A7 7 0 1 0 4 13.500z" fill="#e4e4e4" />
            </Icon>
          </button>
          <button type="button" aria-label="Ebeneneffekte" className="w-3.5 font-['Liberation_Serif',serif] text-[14px] leading-4 font-bold text-[#e4e4e4] italic">
            fx
          </button>
          <button type="button" aria-label="Live-Filter">
            <Icon className="size-3.5">
              <path d="M1 1h14L9.500 8 15 15H1l5.500-7z" fill="#c8c8c8" />
            </Icon>
          </button>
        </div>
        <div className="ml-auto flex items-center gap-1.5">
          <button type="button" aria-label="Gruppieren">
            <Icon className="size-3.5">
              <path d="M0 3h6l1 2h9v10H0z" fill="#989898" />
            </Icon>
          </button>
          <button type="button" aria-label="Pixelebene hinzufügen">
            <Icon className="size-3.5">
              <path d="M4 2h8l4 4v10H4z" fill="#d0d0d0" />
              <path d="M5 5h2v2H5zM9 5h2v2H9zM7 7h2v2H7zM11 7h2v2h-2zM5 9h2v2H5zM9 9h2v2H9zM13 9h2v2h-2zM7 11h2v2H7zM11 11h2v2h-2zM5 13h2v2H5zM9 13h2v2H9zM13 13h2v2h-2z" fill="#666" />
              <path d="M0 .5h4M.5 0v5" stroke="#ccc" strokeDasharray="1 1" />
            </Icon>
          </button>
          <button type="button" aria-label="Ebene löschen">
            <Icon className="size-3.5">
              <path d="M1 3.500h14M6 3V1h4v2" stroke="#ccc" strokeWidth="1.500" />
              <path d="M3 5h10v10.500H3z" fill="#b8b8b8" />
              <path d="M5.500 6.500v7.500M8 6.500v7.500M10.500 6.500v7.500" stroke="#444" strokeWidth="1" />
            </Icon>
          </button>
        </div>
      </div>
    </aside>
  );
}

export default function App() {
  return (
    <div className="flex h-screen min-h-[640px] flex-col overflow-hidden bg-[#333333] font-['Open_Sans','Noto_Sans',sans-serif]">
      <Gradients />
      <MenuBar />
      <Toolbar />
      <ContextBar />
      <div className="flex min-h-0 flex-1 gap-[3px]">
        <div className="flex min-w-0 flex-1 flex-col bg-[#3c3c3c]">
          <div className="flex h-6 shrink-0 items-center justify-between border border-[#2a2a2a] bg-[#404040] pt-px pr-1.5 pl-2 text-[11px] text-[#ececec]">
            {'<Unbenannt> [Geändert] (102.8%)'}
            <button type="button" aria-label="Dokument schließen">
              <Icon className="size-2.5">
                <path d="M2 2l12 12M14 2L2 14" stroke="#dcdcdc" strokeWidth="2" />
              </Icon>
            </button>
          </div>
          <div className="flex min-h-0 flex-1">
            <Canvas />
            <div className="flex w-[17px] flex-col items-center py-1 pl-0.5">
              <Arrow />
              <span className="mt-[286px] h-[235px] w-[7px] rounded-full bg-[#808080]" />
              <Arrow className="mt-auto rotate-180" />
            </div>
          </div>
          <div className="flex h-[18px] shrink-0 items-center pr-[22px] pl-1.5">
            <Arrow className="-rotate-90" />
            <span className="ml-[416px] h-[7px] w-[329px] rounded-full bg-[#808080]" />
            <Arrow className="ml-auto rotate-90" />
          </div>
        </div>
        <AdjustmentPanel />
        <LayerPanel />
      </div>
      <footer className="flex h-[26px] shrink-0 items-center bg-[#333333] pt-0.5 pl-[5px] font-['Noto_Sans',sans-serif] text-[11px] text-[#b8b8b8]">
        <p className="whitespace-pre">
          'Rechteck' ausgewählt. <b className="text-white">Ziehen</b> = Auswahl verschieben. <b className="text-white">Klick</b> auf
          anderes Objekt = Objekt auswählen. <b className="text-white">Klick</b> auf leeren Bereich = Auswahl aufheben.
        </p>
      </footer>
    </div>
  );
}
